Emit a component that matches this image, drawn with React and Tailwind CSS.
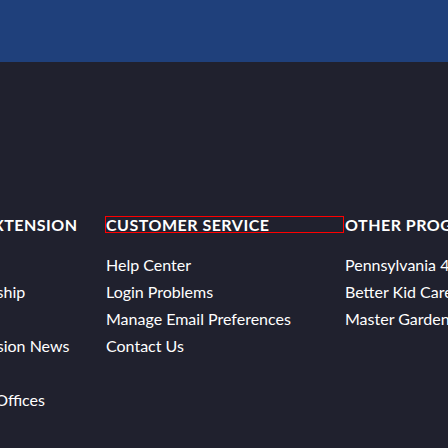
import React from 'react';

const columns = [
  {
    title: "Penn State's Extension",
    links: [
      ['Find a Program', 'Programs Membership'],
      ['Read the Latest', "Penn State's Extension News"],
      ['Visit Us', 'County Extension Offices'],
    ],
  },
  {
    title: 'Customer Service',
    active: true,
    links: [['Help Center'], ['Login Problems'], ['Manage Email Preferences'], ['Contact Us']],
  },
  {
    title: 'Other Programs',
    links: [['Pennsylvania 4-H'], ['Better Kid Care'], ['Master Gardener']],
  },
];

function FooterColumn({ col }) {
  return (
    <div className="w-[239px] shrink-0">
      <h3
        className={
          'border text-[16px] font-bold uppercase leading-[15px] tracking-[0.5px] whitespace-nowrap ' +
          (col.active ? 'border-[#ff0000]' : 'border-transparent')
        }
      >
        {col.title}
      </h3>
      <ul className="mt-[18px] pl-px text-[16px] leading-[27px]">
        {col.links.map((lines, i) => (
          <li key={i} className="whitespace-nowrap">
            {lines.map((l, j) => (
              <a key={j} href="#" className="block text-white">
                {l}
              </a>
            ))}
          </li>
        ))}
      </ul>
    </div>
  );
}

export default function App() {
  return (
    <div className="h-[448px] w-[448px] overflow-hidden bg-[#20212e] text-white" style={{ fontFamily: 'Lato, sans-serif' }}>
      <div className="h-[62px] bg-[#1f407b]" />
      <div className="ml-[-134px] flex pt-[154px]">
        {columns.map((col) => (
          <FooterColumn key={col.title} col={col} />
        ))}
      </div>
    </div>
  );
}
